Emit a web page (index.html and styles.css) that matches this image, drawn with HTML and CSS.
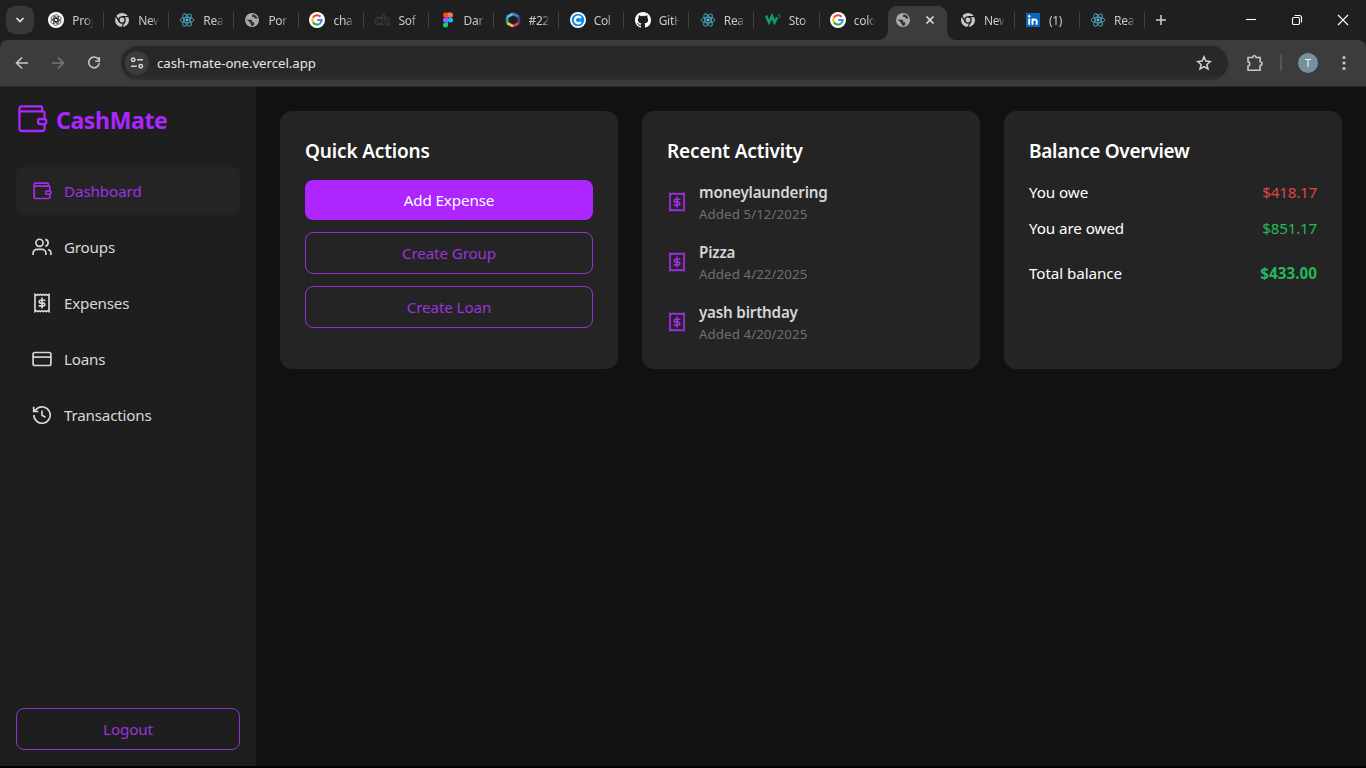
FILE: index.html
```html
<!DOCTYPE html>
<html lang="en">
<head>
<meta charset="utf-8">
<title>CashMate</title>
<link rel="stylesheet" href="styles.css">
</head>
<body>
<svg class="defs" aria-hidden="true">
  <symbol id="wallet" viewBox="0 0 24 24"><path d="M2.600 4.200v15.200c0 1 .6 1.600 1.600 1.600h15.600c1 0 1.600-.6 1.600-1.600v-3.500M21.400 12V7.600c0-.9-.5-1.400-1.300-1.400H2.600M19.600 6.200V3.600c0-.7-.4-1.100-1.100-1.100H4.200c-1 0-1.600.7-1.600 1.700"/><rect x="16.500" y="12" width="6.200" height="3.900" rx="1.600"/></symbol>
  <symbol id="users" viewBox="0 0 24 24"><circle cx="9" cy="7" r="4.300"/><path d="M1.300 21.500v-2a4.600 4.600 0 0 1 4.600-4.600h6.200a4.600 4.600 0 0 1 4.600 4.600v2M16 2.800a4.300 4.300 0 0 1 0 8.400M22.700 21.500v-2a4.600 4.600 0 0 0-3.400-4.500"/></symbol>
  <symbol id="receipt" viewBox="0 0 24 24"><path d="M3.600 1.700v20.600l1.700-.9 1.700.9 1.700-.9 1.600.9 1.700-.9 1.700.9 1.600-.9 1.700.9 1.700-.9 1.700.9V1.700l-1.700.9-1.700-.9-1.700.9-1.600-.9-1.700.9-1.700-.9-1.600.9-1.700-.9-1.700.9zM12 5.500v13M16 8.700h-5.700a1.700 1.700 0 0 0 0 3.400h3.400a1.700 1.700 0 0 1 0 3.400H8"/></symbol>
  <symbol id="card" viewBox="0 0 24 24"><rect x="1.300" y="4.200" width="21.400" height="15.600" rx="2.200"/><path d="M1.300 9.700h21.400"/></symbol>
  <symbol id="history" viewBox="0 0 24 24"><path d="M2.200 12a9.800 9.800 0 1 0 3.100-7.100L2 7.800M2 2.200v5.600h5.600M12 6.600v5.800l4.200 2.200"/></symbol>
  <symbol id="chrome" viewBox="0 0 16 16"><circle cx="8" cy="8" r="7" fill="#c8c8c8"/><circle cx="8" cy="8" r="3.100" fill="#c8c8c8" stroke="#202020" stroke-width="1.300"/><path d="M8 4.700h6.300M5.200 9.700 2 4.200M10.800 9.800l-3 5.200" stroke="#202020" stroke-width="1.300" fill="none"/></symbol>
  <symbol id="react" viewBox="0 0 16 16"><g fill="none" stroke="#4aa7bf" stroke-width=".9"><ellipse cx="8" cy="8" rx="6.900" ry="2.700"/><ellipse cx="8" cy="8" rx="6.900" ry="2.700" transform="rotate(60 8 8)"/><ellipse cx="8" cy="8" rx="6.900" ry="2.700" transform="rotate(120 8 8)"/></g><circle cx="8" cy="8" r="1.400" fill="#5fc6de"/></symbol>
  <symbol id="globe" viewBox="0 0 16 16"><circle cx="8" cy="8" r="7" fill="#a9a9a9"/><path d="M2.400 7.700h4.300c1 0 1.500.6 1.500 1.500v1h2v2.500c-1 1.300-2.500 1.200-3.200 1.100v-2.200H5.700V9.900zM8.200 2.200v2.700h2.200v1.700h3.200C12.800 4 11 2.600 8.200 2.200z" fill="#303030"/></symbol>
  <symbol id="google" viewBox="0 0 16 16"><circle cx="8" cy="8" r="8" fill="#fff"/><g fill="none" stroke-width="2.100"><path d="M11.500 4.700A4.700 4.700 0 0 0 4 5.600" stroke="#ea4335"/><path d="M4 5.600a4.700 4.700 0 0 0 0 4.800" stroke="#fbbc05"/><path d="M4 10.400a4.700 4.700 0 0 0 7 1.100" stroke="#34a853"/><path d="M11 11.500A4.500 4.500 0 0 0 12.600 8H8.200" stroke="#4285f4"/></g></symbol>
</svg>

<header class="browser">
  <div class="tabstrip">
    <div class="tabsearch"><svg width="12" height="12" viewBox="0 0 12 12"><path d="m2.500 4 3.500 3.500L9.500 4"/></svg></div>
    <div class="tabs">
      <div class="tab"><svg class="fav" viewBox="0 0 16 16"><circle cx="8" cy="8" r="8" fill="#fff"/><g fill="none" stroke="#333" stroke-width=".8"><rect x="6" y="2.600" width="4.500" height="7" rx="2.200"/><rect x="6" y="2.600" width="4.500" height="7" rx="2.200" transform="rotate(60 8 8)"/><rect x="6" y="2.600" width="4.500" height="7" rx="2.200" transform="rotate(120 8 8)"/><rect x="6" y="2.600" width="4.500" height="7" rx="2.200" transform="rotate(180 8 8)"/><rect x="6" y="2.600" width="4.500" height="7" rx="2.200" transform="rotate(240 8 8)"/><rect x="6" y="2.600" width="4.500" height="7" rx="2.200" transform="rotate(300 8 8)"/></g></svg><span>Proj</span></div>
      <div class="tab"><svg class="fav"><use href="#chrome"/></svg><span>New</span></div>
      <div class="tab"><svg class="fav"><use href="#react"/></svg><span>Rea</span></div>
      <div class="tab"><svg class="fav"><use href="#globe"/></svg><span>Por</span></div>
      <div class="tab"><svg class="fav"><use href="#google"/></svg><span>cha</span></div>
      <div class="tab"><b class="fav ch">ch</b><span>Sof</span></div>
      <div class="tab"><svg class="fav" viewBox="0 0 16 16"><path d="M8 .500H5.500a2.500 2.500 0 0 0 0 5H8z" fill="#f24e1e"/><path d="M8 .500h2.500a2.500 2.500 0 0 1 0 5H8z" fill="#ff7262"/><path d="M8 5.500H5.500a2.500 2.500 0 0 0 0 5H8z" fill="#a259ff"/><circle cx="10.500" cy="8" r="2.500" fill="#1abcfe"/><path d="M8 10.500H5.500A2.500 2.500 0 1 0 8 13z" fill="#0acf83"/></svg><span>Dar</span></div>
      <div class="tab"><svg class="fav" viewBox="0 0 16 16" fill="none" stroke-width="2.700"><path d="M2.200 11.200V4.700" stroke="#28a9a0"/><path d="M2.200 4.900 8 1.700" stroke="#62b9de"/><path d="m8 1.700 5.800 3.200" stroke="#3c84d8"/><path d="M13.800 4.700v6.500" stroke="#493c82"/><path d="M13.800 11.100 8 14.300" stroke="#d9385f"/><path d="m8 14.300-5.800-3.200" stroke="#e8c545"/></svg><span>#22</span></div>
      <div class="tab"><svg class="fav" viewBox="0 0 16 16"><circle cx="8" cy="8" r="8" fill="#fff"/><circle cx="8" cy="8" r="6.300" fill="#128bef"/><path d="M10.800 6A3.300 3.300 0 1 0 10.800 10" fill="none" stroke="#fff" stroke-width="2.200"/></svg><span>Col</span></div>
      <div class="tab"><svg class="fav" viewBox="0 0 16 16"><path fill="#fff" d="M8 0C3.580 0 0 3.580 0 8c0 3.540 2.290 6.530 5.470 7.590.4.070.55-.17.55-.38 0-.19-.01-.82-.01-1.490-2.010.37-2.530-.49-2.690-.94-.09-.23-.48-.94-.82-1.130-.28-.15-.68-.52-.01-.53.63-.01 1.080.58 1.230.82.72 1.210 1.870.87 2.330.66.07-.52.28-.87.51-1.070-1.780-.2-3.640-.89-3.640-3.950 0-.87.31-1.590.82-2.150-.08-.2-.36-1.020.08-2.120 0 0 .67-.21 2.200.82a7.500 7.500 0 0 1 4 0c1.530-1.040 2.200-.82 2.200-.82.44 1.100.16 1.920.08 2.120.51.56.82 1.270.82 2.150 0 3.070-1.870 3.750-3.650 3.950.29.25.54.73.54 1.480 0 1.070-.01 1.930-.01 2.200 0 .21.150.46.550.38A8 8 0 0 0 16 8c0-4.420-3.580-8-8-8z"/></svg><span>GitH</span></div>
      <div class="tab"><svg class="fav"><use href="#react"/></svg><span>Rea</span></div>
      <div class="tab"><svg class="fav" viewBox="0 0 16 16" fill="none" stroke="#129b68"><path d="m1 3.500 3 7 3-6.500 2.500 6.500 2.700-5" stroke-width="2.500"/><path d="M13 2.700h2L14 4c1.300 0 1.300 2-.5 1.800" stroke-width=".9"/></svg><span>Sto</span></div>
      <div class="tab quiet"><svg class="fav"><use href="#google"/></svg><span>colo</span></div>
      <div class="tab active"><svg class="shape" viewBox="0 0 76 34"><path d="M0 34a9 9 0 0 0 9-9V9a9 9 0 0 1 9-9h41a9 9 0 0 1 9 9v16a9 9 0 0 0 8 9z"/></svg><svg class="fav"><use href="#globe"/></svg><svg class="close" viewBox="0 0 10 10"><path d="m1.500 1.500 7 7m0-7-7 7"/></svg></div>
      <div class="tab"><svg class="fav"><use href="#chrome"/></svg><span>New</span></div>
      <div class="tab"><svg class="fav" viewBox="0 0 16 16"><rect x="1" y="1" width="14" height="14" fill="#0a66c2"/><path d="M4.200 6.500v6.200M7.500 12.700V6.500M7.500 9.500c0-2.500 4.200-3 4.200 0v3.200" fill="none" stroke="#fff" stroke-width="1.900"/><circle cx="4.200" cy="4.200" r="1.200" fill="#fff"/></svg><span>(1)</span></div>
      <div class="tab"><svg class="fav"><use href="#react"/></svg><span>Rea</span></div>
    </div>
    <svg class="plus" viewBox="0 0 12 12"><path d="M6 1v10M1 6h10"/></svg>
    <div class="window">
      <svg viewBox="0 0 12 12"><path d="M1 5.500h10"/></svg>
      <svg viewBox="0 0 12 12"><rect x="1.500" y="3.500" width="7" height="7" rx="1.200"/><path d="M3.500 1.500h5a2 2 0 0 1 2 2v5"/></svg>
      <svg viewBox="0 0 12 12"><path d="m1 1 10 10M11 1 1 11"/></svg>
    </div>
  </div>
  <div class="toolbar">
    <svg class="tool" viewBox="0 0 16 16"><path d="M14 8H2.500M8 2.500 2.500 8 8 13.500"/></svg>
    <svg class="tool dim" viewBox="0 0 16 16"><path d="M2 8h11.500M8 2.500 13.500 8 8 13.500"/></svg>
    <svg class="tool" viewBox="0 0 16 16"><path d="M12.500 4.500A5.300 5.300 0 1 0 13.300 8M13.300 2v4.200H9.200"/></svg>
    <div class="omnibox">
      <div class="site"><svg viewBox="0 0 14 14"><circle cx="3.200" cy="3.700" r="1.700"/><path d="M7.200 3.700H13M1 10.300h5.800"/><circle cx="10.800" cy="10.300" r="1.700"/></svg></div>
      <span class="url">cash-mate-one.vercel.app</span>
      <svg class="star" viewBox="0 0 16 16"><path d="m8 1.800 1.800 4.300 4.600.4-3.500 3 1.100 4.500L8 11.600 4 14l1.100-4.500-3.500-3 4.600-.4z"/></svg>
    </div>
    <svg class="puzzle" viewBox="0 0 18 18"><path d="M2 3.500h4.500a1.800 1.800 0 0 1 3.600 0h4v4.200a1.900 1.900 0 0 1 0 3.800v4.700H2v-4.100a2.300 2.300 0 0 0 0-4.500z"/></svg>
    <i class="divider"></i>
    <div class="avatar">T</div>
    <svg class="dots" viewBox="0 0 4 16"><circle cx="2" cy="2.500" r="1.600"/><circle cx="2" cy="8" r="1.600"/><circle cx="2" cy="13.500" r="1.600"/></svg>
  </div>
</header>

<div class="app">
  <aside class="sidebar">
    <div class="brand"><svg class="icon"><use href="#wallet"/></svg><span>CashMate</span></div>
    <nav class="nav">
      <a class="selected"><svg class="icon"><use href="#wallet"/></svg>Dashboard</a>
      <a><svg class="icon"><use href="#users"/></svg>Groups</a>
      <a><svg class="icon"><use href="#receipt"/></svg>Expenses</a>
      <a><svg class="icon"><use href="#card"/></svg>Loans</a>
      <a><svg class="icon"><use href="#history"/></svg>Transactions</a>
    </nav>
    <button class="btn logout">Logout</button>
  </aside>
  <main class="cards">
    <section class="panel">
      <h2>Quick Actions</h2>
      <div class="actions">
        <button class="btn primary">Add Expense</button>
        <button class="btn">Create Group</button>
        <button class="btn">Create Loan</button>
      </div>
    </section>
    <section class="panel">
      <h2>Recent Activity</h2>
      <div class="activity">
        <div class="entry"><svg class="icon"><use href="#receipt"/></svg><div><p class="name">moneylaundering</p><p class="date">Added 5/12/2025</p></div></div>
        <div class="entry"><svg class="icon"><use href="#receipt"/></svg><div><p class="name">Pizza</p><p class="date">Added 4/22/2025</p></div></div>
        <div class="entry"><svg class="icon"><use href="#receipt"/></svg><div><p class="name">yash birthday</p><p class="date">Added 4/20/2025</p></div></div>
      </div>
    </section>
    <section class="panel">
      <h2 class="wide">Balance Overview</h2>
      <div class="balance">
        <div class="row"><span>You owe</span><span class="amount red">$418.17</span></div>
        <div class="row"><span>You are owed</span><span class="amount green">$851.17</span></div>
        <div class="row total"><span>Total balance</span><span class="green strong">$433.00</span></div>
      </div>
    </section>
  </main>
</div>
</body>
</html>
```

FILE: styles.css
```css
* { box-sizing: border-box; }
body {
  margin: 0;
  height: 768px;
  display: flex;
  flex-direction: column;
  overflow: hidden;
  background: #000;
  color: #fff;
  font: 15.2px/24px "Segoe UI", "Noto Sans", sans-serif;
}
svg { flex: none; }
p, h2 { margin: 0; }
.defs { display: none; }

/* Browser frame */
.browser { height: 87px; flex: none; background: #1f1f1f; }
.tabstrip { height: 40px; display: flex; align-items: center; }
.tabsearch {
  width: 28px; height: 28px; margin-left: 6px; border-radius: 9px;
  background: #383838; display: grid; place-items: center; flex: none;
}
.tabsearch svg { fill: none; stroke: #e3e3e3; stroke-width: 1.7; }
.tabs { display: flex; margin-left: 4px; height: 40px; }
.tab {
  width: 65.05px; flex: none; display: flex; align-items: center; gap: 8px;
  padding-left: 10.3px; position: relative; font-size: 12px; letter-spacing: -.3px; color: #c9c9c9;
}
.tab:first-child { width: 66px; }
.tab::after { content: ""; position: absolute; right: 0; top: 12px; width: 1px; height: 16px; background: #404040; }
.tab.active::after, .tab.quiet::after { display: none; }
.tab span {
  width: 22px; padding-top: 2px; overflow: hidden; white-space: nowrap;
  mask-image: linear-gradient(90deg, #000 60%, transparent 96%);
}
.fav { width: 16px; height: 16px; flex: none; }
.ch { font: 700 14px/15px "Noto Sans", sans-serif; color: #1f1f1f; -webkit-text-stroke: .5px #555; letter-spacing: -.7px; }
.tab.active { align-self: flex-end; height: 34px; padding-bottom: 6px; gap: 14px; }
.tab.active svg { position: relative; }
.tab.active .shape { position: absolute; left: -6px; top: 0; width: 76px; height: 34px; fill: #3c3c3c; }
.close { width: 10px; height: 10px; stroke: #e3e3e3; stroke-width: 1.6; }
.plus { width: 12px; height: 12px; margin-left: 10px; stroke: #d0d0d0; stroke-width: 1.5; }
.window { display: flex; gap: 34px; margin-left: auto; margin-right: 17px; }
.window svg { width: 12px; height: 12px; fill: none; stroke: #fff; stroke-width: 1.1; }
.toolbar {
  height: 47px; background: #3c3c3c; border-radius: 8px 8px 0 0; border-bottom: 1px solid #2a282a;
  display: flex; align-items: center; padding: 0 20px 0 14px;
}
.tool { width: 16px; height: 16px; margin-right: 20px; fill: none; stroke: #c7c7c7; stroke-width: 1.6; }
.dim { stroke: #777; }
.omnibox {
  width: 1107px; height: 34px; margin-left: -1px; border-radius: 17px;
  background: linear-gradient(#282828 82%, #303030);
  box-shadow: 0 0 2px #323232; display: flex; align-items: center; padding: 0 16px 0 4px; flex: none;
}
.site { width: 24px; height: 24px; border-radius: 50%; background: #3b3b3b; display: grid; place-items: center; }
.site svg, .star { fill: none; stroke: #d4d4d4; stroke-width: 1.5; width: 14px; height: 14px; }
.url { margin-left: 8px; padding-bottom: 1px; font-size: 13.2px; color: #e6e6e6; letter-spacing: -.02px; }
.star { width: 16px; height: 16px; margin-left: auto; }
.puzzle { width: 18px; height: 18px; margin-left: 18px; fill: none; stroke: #c7c7c7; stroke-width: 1.6; }
.divider { width: 2px; height: 16px; background: #555; margin-left: 16px; }
.avatar {
  width: 20px; height: 20px; margin-left: 16px; border-radius: 50%; background: #78909c;
  font-size: 11px; line-height: 20px; text-align: center; color: #f1f1f1;
}
.dots { width: 4px; height: 16px; margin-left: 24px; fill: #c7c7c7; }

/* Application */
.app { height: 679px; display: flex; background: #111; }
.sidebar { width: 256px; padding: 16px; background: #1e1e1e; display: flex; flex-direction: column; }
.icon { width: 20px; height: 20px; fill: none; stroke: currentColor; stroke-width: 2; }
.brand { height: 32px; display: flex; align-items: center; gap: 8px; color: #ad26ff; font-size: 23px; font-weight: 700; letter-spacing: -.35px; }
.brand span { padding-top: 2px; }
.brand .icon { width: 32px; height: 32px; stroke-width: 1.7; }
.nav { display: flex; flex-direction: column; gap: 8px; margin-top: 32px; }
.nav a { height: 48px; padding: 0 16px; border-radius: 8px; display: flex; align-items: center; gap: 12px; color: #d8d8d8; letter-spacing: -.2px; }
.nav .selected { background: #242424; color: #a32ee8; letter-spacing: -.1px; }
.btn {
  height: 42px; width: 100%; padding: 0; border: 1px solid #9333cf; border-radius: 8px;
  background: transparent; color: #9d32dd; font: inherit; letter-spacing: -.12px;
}
.logout { margin-top: auto; }
.cards { flex: 1; padding: 24px; display: grid; grid-template-columns: repeat(3, 1fr); gap: 24px; align-items: start; }
.panel { height: 258px; padding: 25px; border-radius: 12px; background: #242424; }
.panel h2 { height: 28px; padding-top: 1px; font-size: 19px; line-height: 28px; font-weight: 600; letter-spacing: -.15px; margin-bottom: 16px; }
.panel .wide { letter-spacing: -.27px; }
.actions { display: flex; flex-direction: column; gap: 12px; }
.primary { height: 40px; border: 0; background: #ad26ff; color: #fff; }
.activity { display: flex; flex-direction: column; gap: 16px; }
.entry { display: flex; align-items: center; gap: 12px; }
.entry .icon { color: #a32ee8; }
.name { color: #d6d6d6; font-weight: 600; letter-spacing: -.2px; }
.date { color: #6b7078; font-size: 13.3px; line-height: 20px; letter-spacing: .08px; }
.balance { display: flex; flex-direction: column; gap: 12px; }
.row { display: flex; justify-content: space-between; letter-spacing: -.08px; }
.amount { letter-spacing: -.2px; }
.total { padding-top: 9px; }
.red { color: #e04545; }
.green { color: #25b85a; }
.strong { font-weight: 700; letter-spacing: .05px; }
```
